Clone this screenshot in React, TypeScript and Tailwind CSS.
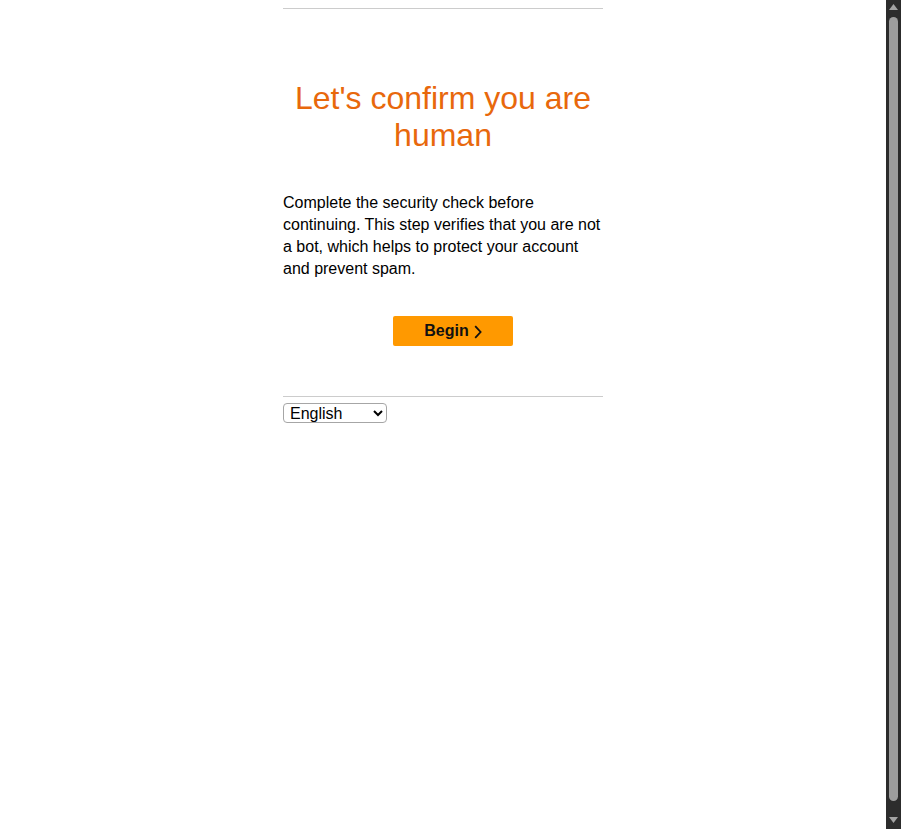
function FakeScrollbar() {
  return (
    <div className="flex h-screen w-[15px] shrink-0 flex-col items-center bg-[#2c2c2c]">
      <svg width="9" height="6" viewBox="0 0 9 6" className="mt-[4px]">
        <path d="M4.5 0 9 6H0z" fill="#a3a3a3" />
      </svg>
      <div className="mt-[7px] w-[9px] flex-1 rounded-t-[5px] rounded-b-[5px] bg-[#9d9d9d]" />
      <svg width="9" height="6" viewBox="0 0 9 6" className="mt-[16px] mb-[6px]">
        <path d="M0 0h9L4.5 6z" fill="#a3a3a3" />
      </svg>
    </div>
  );
}

export default function App() {
  return (
    <div className="flex h-screen overflow-hidden bg-white">
      <div className="min-w-0 flex-1 bg-white pt-2 text-black [font-family:'Liberation_Sans',Arial,sans-serif]">
        <div className="mx-auto w-[320px]">
          <div className="border-t border-[#cccccc]" />

          <h1 className="mt-[71px] text-center text-[32px] leading-[37px] font-normal text-[#e8680c]">
            Let's confirm you are human
          </h1>

          <p className="mt-[38px] text-base leading-[22px]">
            Complete the security check before continuing. This step verifies that you are not a bot, which helps
            to protect your account and prevent spam.
          </p>

          <div className="mt-[36px] flex justify-center pl-5">
            <button
              type="button"
              className="flex h-[30px] w-[120px] items-center justify-center gap-[5px] rounded-[2px] bg-[#ff9900] text-base font-bold text-[#111111]"
            >
              Begin
              <svg width="8" height="14" viewBox="0 0 8 14" fill="none" className="mt-[1px]">
                <path d="M1.2 1.2 6.6 7l-5.4 5.8" stroke="#111111" strokeWidth="1.8" />
              </svg>
            </button>
          </div>

          <div className="mt-[50px] border-t border-[#cccccc]" />

          <select
            defaultValue="en"
            className="mt-[6px] h-[20px] w-[104px] rounded-[4px] border border-[#a6a6a6] bg-white pl-[2px] text-base leading-[18px] text-black"
          >
            <option value="en">English</option>
            <option value="de">Deutsch</option>
            <option value="es">Español</option>
            <option value="fr">Français</option>
            <option value="it">Italiano</option>
            <option value="ja">日本語</option>
          </select>
        </div>
      </div>
      <FakeScrollbar />
    </div>
  );
}
